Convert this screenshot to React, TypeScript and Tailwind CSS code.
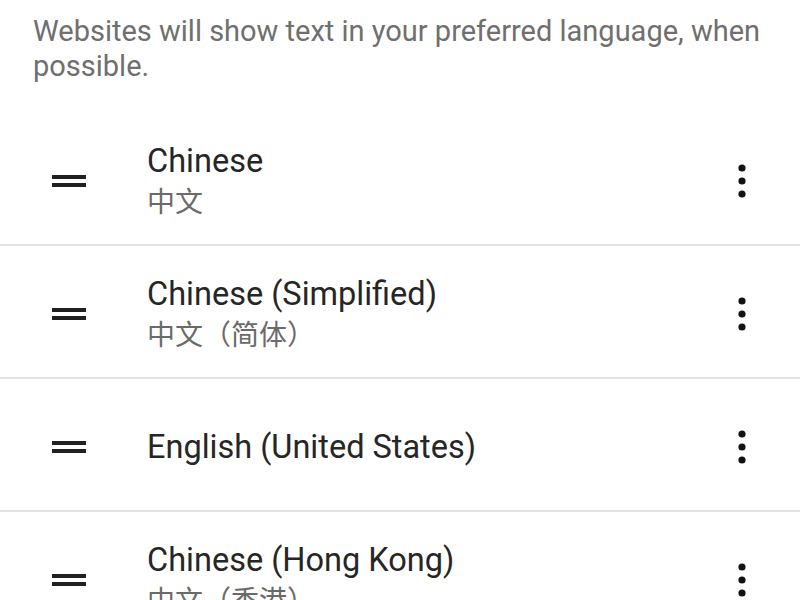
const languages = [
  { name: "Chinese", native: "中文" },
  { name: "Chinese (Simplified)", native: "中文（简体）" },
  { name: "English (United States)", native: "" },
  { name: "Chinese (Hong Kong)", native: "中文（香港）" },
];

const DragHandle = () => (
  <svg width="36" height="14" viewBox="0 0 36 14">
    <rect x="1" y="1" width="34" height="4" fill="#202020" />
    <rect x="1" y="9" width="34" height="4" fill="#202020" />
  </svg>
);

const Kebab = () => (
  <svg width="10" height="36" viewBox="0 0 10 36">
    <circle cx="5" cy="5" r="3.6" fill="#111" />
    <circle cx="5" cy="18" r="3.6" fill="#111" />
    <circle cx="5" cy="31" r="3.6" fill="#111" />
  </svg>
);

export default function App() {
  return (
    <div
      className="w-[800px] h-[600px] overflow-hidden bg-white"
      style={{ fontFamily: "Roboto, 'Noto Sans CJK SC', sans-serif" }}
    >
      {/* Intro */}
      <p className="px-[33px] pt-[14px] text-[29px] leading-[35px] text-[#6f6f6f]">
        Websites will show text in your preferred language, when possible.
      </p>

      {/* Language list */}
      <ul className="mt-[29px]">
        {languages.map((lang) => (
          <li
            key={lang.name}
            className="h-[133px] flex items-center border-b-2 border-[#e2e2e2]"
          >
            <div className="w-[147px] flex justify-start pl-[51px] pt-[4px]">
              <DragHandle />
            </div>
            <div className="flex-1 flex flex-col pt-[4px]">
              <span className="text-[32.5px] leading-[40px] text-[#262626]">
                {lang.name}
              </span>
              {lang.native && (
                <span className="text-[28px] leading-[36px] text-[#6a6a6a] mt-[4px]">
                  {lang.native}
                </span>
              )}
            </div>
            <div className="w-[100px] flex justify-start pl-[37px] pt-[4px]">
              <Kebab />
            </div>
          </li>
        ))}
      </ul>
    </div>
  );
}
